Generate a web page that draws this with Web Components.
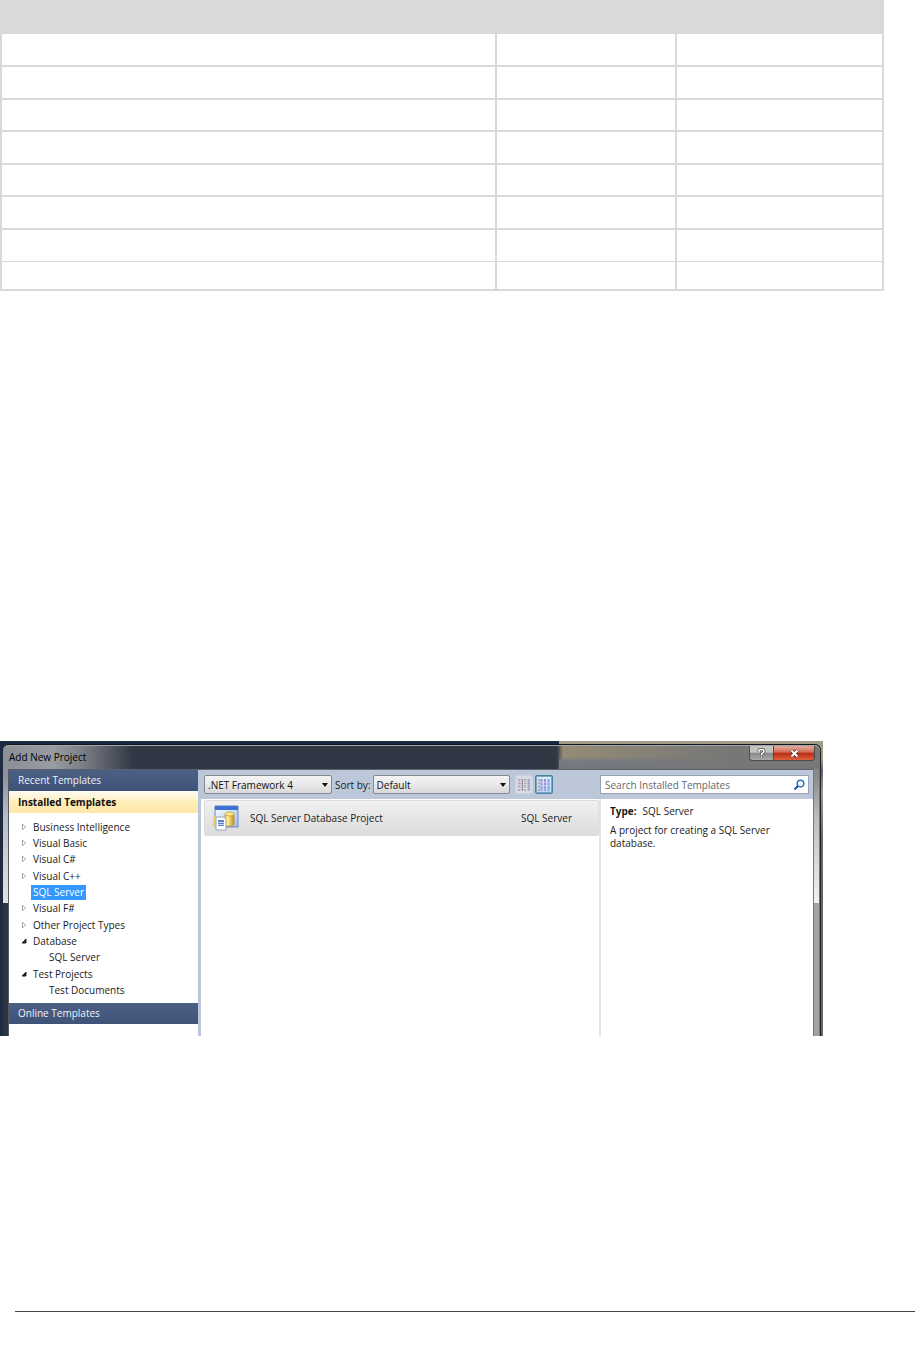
<!DOCTYPE html>
<html lang="en">
<head>
<meta charset="utf-8">
<title>Add New Project</title>
<style>
  body {
    margin: 0;
    background: #fff;
    color: #1a1a1a;
    font-family: "Open Sans", "Noto Sans", sans-serif;
    font-size: 10px;
    line-height: 16px;
  }
  grid-table { margin-right: 35px; }
  project-dialog { margin: 450px 96px 275px 0; }
  hr {
    margin: 0 4px 45px 15px;
    border: 0;
    border-top: 1px solid #444;
  }
</style>
</head>
<body>
<grid-table rows="8"></grid-table>

<project-dialog heading="Add New Project">
  <template-group slot="side" heading="Recent Templates"></template-group>
  <template-group slot="side" heading="Installed Templates" open>
    <tree-item state="closed">Business Intelligence</tree-item>
    <tree-item state="closed">Visual Basic</tree-item>
    <tree-item state="closed">Visual C#</tree-item>
    <tree-item state="closed">Visual C++</tree-item>
    <tree-item selected>SQL Server</tree-item>
    <tree-item state="closed">Visual F#</tree-item>
    <tree-item state="closed">Other Project Types</tree-item>
    <tree-item state="open">Database</tree-item>
    <tree-item child>SQL Server</tree-item>
    <tree-item state="open">Test Projects</tree-item>
    <tree-item child>Test Documents</tree-item>
  </template-group>
  <template-group slot="side" heading="Online Templates"></template-group>

  <tool-select slot="tools" label="Framework" hide-label value=".NET Framework 4" style="--box: 128px"></tool-select>
  <tool-select slot="tools" label="Sort by:" value="Default" style="--box: 137px"></tool-select>
  <view-buttons slot="tools"></view-buttons>
  <search-box slot="search" placeholder="Search Installed Templates"></search-box>

  <project-row slot="list" kind="SQL Server">SQL Server Database Project</project-row>
  <project-info slot="info" type="SQL Server">A project for creating a SQL Server database.</project-info>
</project-dialog>

<hr>

<script>
function define(name, html, setup) {
  const template = document.createElement("template");
  template.innerHTML = html;
  customElements.define(name, class extends HTMLElement {
    constructor() {
      super();
      this.attachShadow({ mode: "open" });
    }
    connectedCallback() {
      if (this.shadowRoot.childNodes.length) return;
      this.shadowRoot.appendChild(template.content.cloneNode(true));
      if (setup) setup(this, this.shadowRoot);
    }
  });
}

define("grid-table", /*html*/ `
  <style>
  :host { display: block; }
  table {
    width: 100%;
    table-layout: fixed;
    border-collapse: separate;
    border-spacing: 0;
    border-right: 2px solid #d9d9d9;
    box-sizing: border-box;
  }
  th, td { padding: 0; box-sizing: border-box; }
  th { height: 34px; background: #d9d9d9; }
  th:nth-child(2) { width: 180px; }
  th:nth-child(3) { width: 207px; }
  td {
    height: 33px;
    border-left: 2px solid #d9d9d9;
    border-bottom: 2px solid #d9d9d9;
  }
  tr:nth-child(3) td, tr:nth-child(5) td, tr:nth-child(7) td { height: 32px; }
  tr:nth-child(7) td { border-bottom-width: 1px; }
  tr:last-child td { height: 29px; }
  </style>
  <table>
    <thead><tr><th></th><th></th><th></th></tr></thead>
    <tbody></tbody>
  </table>
`, (host, root) => {
  const body = root.querySelector("tbody");
  for (let i = 0; i < Number(host.getAttribute("rows")); i++) {
    const row = body.insertRow();
    for (let j = 0; j < 3; j++) row.insertCell();
  }
});

define("project-dialog", /*html*/ `
  <style>
  :host {
    display: block;
    background:
      linear-gradient(#a29c85 0 16px, #5c6478 30px, #999 50px, #666 100px) right / 3px 100% no-repeat,
      linear-gradient(90deg, #1c2b42 0 559px, #a29c85 559px);
  }
  .window {
    margin-left: 3px;
    margin-right: 2px;
    border-top: 1px solid #10151f;
    border-right: 1px solid #222;
    border-radius: 6px 6px 0 0;
    padding: 0 7px 0 6px;
    background:
      linear-gradient(90deg, #0000 0 5px, #555b66 5px) left / 6px 100% no-repeat,
      linear-gradient(#8d9299 0 30px, #b9bcc1 70px, #e2e3e6 158px, #30343c 158px) left / 6px 100% no-repeat,
      linear-gradient(90deg, #777 0 1px, #0000 1px 6px, #777 6px) right / 7px 100% no-repeat,
      linear-gradient(#888 0 30px, #bbb 70px, #f2f2f2 158px, #a2a2a2 158px) right / 7px 100% no-repeat,
      #323746;
  }
  .desk { padding-top: 3px; }
  header {
    display: flex;
    justify-content: space-between;
    align-items: flex-start;
    height: 24px;
    margin: 0 -7px 0 -6px;
    border-top: 1px solid #a4a8ad;
    border-radius: 6px 6px 0 0;
    box-sizing: border-box;
    background:
      linear-gradient(90deg, #8c9096 0, #989ca2 50px, #8c9096cc 80px, #8c909600 130px),
      linear-gradient(90deg, #77777700, #777777 170px) right / 261px 100% no-repeat,
      linear-gradient(#77777700 0 45%, #737988 70%, #777777) right / 261px 100% no-repeat,
      linear-gradient(90deg, #323746 0 554px, #958c73 560px);
  }
  h1 {
    margin: 0;
    padding: 3px 0 0 6px;
    font-size: 10px;
    line-height: 16px;
    font-weight: 400;
    color: #000;
  }
  .caption {
    display: flex;
    margin-right: 5px;
    border: 1px solid #4b4b4b;
    border-top: 0;
    border-radius: 0 0 4px 4px;
    overflow: hidden;
  }
  .caption button {
    display: grid;
    place-items: center;
    width: 23px;
    height: 14px;
    border: 0;
    padding: 0;
    background: linear-gradient(#c4c4c0 0 45%, #88888a 50%, #a8a8a6);
  }
  .caption .close {
    width: 41px;
    border-left: 1px solid #4b4b4b;
    background: linear-gradient(#e0a08e 0 10%, #d06a54 45%, #b52c13 50%, #e0603f);
  }
  .body {
    display: grid;
    grid-template-columns: 189px minmax(0, 1fr) 214px;
    grid-template-rows: 29px 1fr;
    border-top: 1px solid #5b606b;
    background: #fff;
  }
  .side {
    grid-row: span 2;
    padding-bottom: 12px;
    border-right: 3px solid #bac6d9;
    margin-right: -3px;
  }
  .tools, .search { display: flex; align-items: center; background: #bcc8da; }
  .tools { gap: 3px; margin-left: 3px; padding-left: 3px; }
  .search { padding: 0 4px 0 1px; }
  .list { margin-left: 3px; padding: 1px 0 0 3px; }
  .info { border-left: 2px solid #e4e4e8; }
  </style>
  <div class="desk">
    <section class="window">
      <header>
        <h1></h1>
        <div class="caption">
          <button aria-label="Help"><svg width="9" height="11" viewBox="0 0 9 11" fill="none">
            <path d="M2 4V3Q2 1.5 4.5 1.5T7 3.3Q7 4.5 5.5 5.2T4.5 7M4.5 8.3V9.8" stroke="#444" stroke-width="3"/>
            <path d="M2 4V3Q2 1.5 4.5 1.5T7 3.3Q7 4.5 5.5 5.2T4.5 7M4.5 8.3V9.8" stroke="#fff" stroke-width="1.5"/>
          </svg></button>
          <button class="close" aria-label="Close"><svg width="11" height="9" viewBox="0 0 11 9" fill="none">
            <path d="M2.5 1.5l6 6M8.5 1.5l-6 6" stroke="#533" stroke-width="3.6"/>
            <path d="M2.5 1.5l6 6M8.5 1.5l-6 6" stroke="#fff" stroke-width="2"/>
          </svg></button>
        </div>
      </header>
      <div class="body">
        <div class="side"><slot name="side"></slot></div>
        <div class="tools"><slot name="tools"></slot></div>
        <div class="search"><slot name="search"></slot></div>
        <div class="list"><slot name="list"></slot></div>
        <div class="info"><slot name="info"></slot></div>
      </div>
    </section>
  </div>
`, (host, root) => {
  root.querySelector("h1").textContent = host.getAttribute("heading");
});

define("template-group", /*html*/ `
  <style>
  :host { display: block; }
  h2 {
    margin: 0;
    padding: 0 9px;
    font-size: 10px;
    line-height: 21px;
    font-weight: 400;
    color: #f0f3f8;
    background: linear-gradient(#4c6086, #3f5379);
  }
  :host([open]) h2 {
    margin-top: 1px;
    font-weight: 700;
    color: #111;
    background: linear-gradient(#fffaf0, #ffeeb8 50%, #ffe8a6);
  }
  .items { display: none; }
  :host([open]) .items { display: block; padding: 6px 0 5px 12px; }
  ::slotted(:nth-child(3n)) { margin-bottom: 1px; }
  </style>
  <h2></h2>
  <div class="items" role="tree"><slot></slot></div>
`, (host, root) => {
  root.querySelector("h2").textContent = host.getAttribute("heading");
});

define("tree-item", /*html*/ `
  <style>
  :host { display: flex; align-items: center; height: 16px; }
  svg { flex: none; width: 6px; height: 8px; margin-right: 4px; visibility: hidden; }
  path { fill: none; stroke: #a8a8a8; }
  :host([state]) svg { visibility: visible; }
  :host([state="open"]) path { fill: #222; stroke: #222; }
  :host([child]) { padding-left: 16px; }
  span { padding: 0 2px; line-height: 15px; }
  :host([selected]) span { background: #3399ff; color: #fff; }
  </style>
  <svg viewBox="0 0 6 8"><path d="M1.5 1v6L4.5 4z"/></svg>
  <span><slot></slot></span>
`, (host, root) => {
  host.setAttribute("role", "treeitem");
  if (host.getAttribute("state") === "open") {
    root.querySelector("path").setAttribute("d", "M5 2v4H1z");
  }
});

define("tool-select", /*html*/ `
  <style>
  :host { display: flex; align-items: center; gap: 2px; }
  :host([hide-label]) label { display: none; }
  label { white-space: nowrap; }
  .box { display: grid; align-items: center; width: var(--box); }
  select, svg { grid-area: 1 / 1; }
  select {
    appearance: none;
    width: 100%;
    height: 19px;
    padding: 0 3px;
    border: 1px solid #858a92;
    border-radius: 2px;
    background: linear-gradient(#f4f4f4, #e9e9e9 50%, #d8d8d8);
    color: #111;
    font: inherit;
  }
  svg { justify-self: end; margin-right: 4px; pointer-events: none; }
  </style>
  <label for="choice"></label>
  <div class="box">
    <select id="choice"><option></option></select>
    <svg width="6" height="4" viewBox="0 0 6 4"><path d="M0 0h6L3 4z" fill="#111"/></svg>
  </div>
`, (host, root) => {
  root.querySelector("label").textContent = host.getAttribute("label");
  root.querySelector("select").setAttribute("aria-label", host.getAttribute("label"));
  root.querySelector("option").textContent = host.getAttribute("value");
});

define("view-buttons", /*html*/ `
  <style>
  :host { display: flex; gap: 2px; margin-left: 2px; }
  button {
    display: grid;
    place-items: center;
    width: 18px;
    height: 19px;
    padding: 0;
    border: 1px solid #ccd3df;
    border-radius: 2px;
    background: #d5dbe5;
  }
  button[aria-pressed="true"] {
    border-color: #4681a6;
    background: linear-gradient(#dcecf8, #b5ddf3);
    box-shadow: 0 0 0 1px #79a5c2 inset;
  }
  </style>
  <button aria-label="Small icons" aria-pressed="false"><svg width="12" height="12" viewBox="0 0 12 12">
    <path d="M1 0v12M7 0v12" stroke="#c0a9a0" stroke-width="2" stroke-dasharray="2 1.3"/>
    <path d="M3.500 0v12M10 0v12" stroke="#b0aed0" stroke-width="2" stroke-dasharray="1 1"/>
    <path d="M4.500 0v12M11 0v12" stroke="#8f8fa8" stroke-width="1"/>
  </svg></button>
  <button aria-label="Medium icons" aria-pressed="true"><svg width="12" height="12" viewBox="0 0 12 12">
    <path d="M1 0v12" stroke="#c0a590" stroke-width="2" stroke-dasharray="2 1.3"/>
    <path d="M3.500 0v12M7 0v12M10.500 0v12" stroke="#9a94da" stroke-width="2" stroke-dasharray="3 .6"/>
  </svg></button>
`);

define("search-box", /*html*/ `
  <style>
  :host {
    display: flex;
    align-items: center;
    flex: 1;
    height: 19px;
    box-sizing: border-box;
    border: 1px solid #98a2b3;
    background: #fff;
  }
  input {
    flex: 1;
    min-width: 0;
    padding: 0 4px;
    border: 0;
    background: none;
    font: inherit;
  }
  input::placeholder { color: #666; opacity: 1; }
  button { display: flex; padding: 0 3px; border: 0; background: none; }
  </style>
  <input type="search">
  <button aria-label="Search"><svg width="12" height="12" viewBox="0 0 12 12" fill="none">
    <circle cx="7.500" cy="4.500" r="3.300" stroke="#2f6fc0" stroke-width="1.500"/>
    <path d="M5 7L1.500 10.500" stroke="#1d54a8" stroke-width="2"/>
  </svg></button>
`, (host, root) => {
  const input = root.querySelector("input");
  input.placeholder = host.getAttribute("placeholder");
  input.setAttribute("aria-label", host.getAttribute("placeholder"));
});

define("project-row", /*html*/ `
  <style>
  :host {
    display: flex;
    align-items: center;
    height: 36px;
    padding: 0 26px 0 7px;
    box-sizing: border-box;
    border: 1px solid #dcdcdc;
    border-radius: 2px;
    background: linear-gradient(#f0f0f0, #dcdcdc);
  }
  svg { flex: none; margin-right: 11px; }
  .name { flex: 1; }
  </style>
  <svg width="27" height="26" viewBox="0 0 27 26">
    <defs>
      <linearGradient id="pane" x2="1" y2="1"><stop stop-color="#fff"/><stop offset="1" stop-color="#9fc0f0"/></linearGradient>
      <linearGradient id="gold"><stop stop-color="#f6cf45"/><stop offset=".3" stop-color="#fff0a0"/><stop offset="1" stop-color="#c98e10"/></linearGradient>
    </defs>
    <path d="M3 1h23v21H3z" fill="url(#pane)" stroke="#6585c4"/>
    <path d="M3 1h23v4H3z" fill="#3f70d6"/>
    <path d="M13 9v10c0 3 9 3 9 0V9z" fill="url(#gold)" stroke="#b5861a" stroke-width=".7"/>
    <ellipse cx="17.500" cy="9" rx="4.500" ry="2" fill="#ffe98a" stroke="#c59520" stroke-width=".7"/>
    <path d="M1 11h3v11H1z" fill="#e9d275"/>
    <path d="M4 12h8l2 2v11H4z" fill="#fff" stroke="#98a5bb"/>
    <path d="M6 15h6v6H6z" fill="#5c86cf"/>
    <path d="M6 17.500h6M6 19.500h6" stroke="#c4d6f4"/>
  </svg>
  <span class="name"><slot></slot></span>
  <span class="kind"></span>
`, (host, root) => {
  root.querySelector(".kind").textContent = host.getAttribute("kind");
});

define("project-info", /*html*/ `
  <style>
  :host { display: block; padding: 4px 32px 0 9px; }
  p { margin: 0 0 5px; line-height: 16px; }
  p + p { line-height: 13px; }
  b { margin-right: 6px; }
  </style>
  <p><b>Type:</b><span></span></p>
  <p><slot></slot></p>
`, (host, root) => {
  root.querySelector("span").textContent = host.getAttribute("type");
});
</script>
</body>
</html>
